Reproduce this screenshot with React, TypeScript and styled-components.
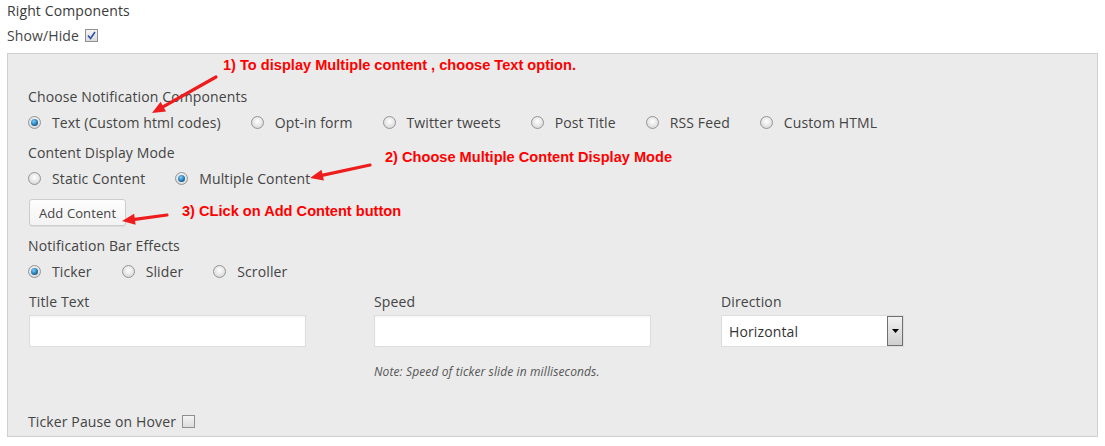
import React from "react";
import styled, { createGlobalStyle } from "styled-components";

const Global = createGlobalStyle`
  html, body { margin: 0; padding: 0; background: #fff; }
  body { font-family: "Open Sans", "Noto Sans", sans-serif; font-size: 14px; color: #444; letter-spacing: 0.12px; }
`;

const Page = styled.div`
  position: relative;
  width: 1105px;
  height: 446px;
  padding: 1px 0 0 7px;
  box-sizing: border-box;
`;

const Title = styled.div`
  line-height: 20px;
  color: #3a3a3a;
`;

const ShowHide = styled.div`
  display: flex;
  align-items: center;
  height: 20px;
  margin-top: 4px;
  gap: 6px;
`;

const Check = styled.span<{ $checked?: boolean }>`
  display: inline-flex;
  align-items: center;
  justify-content: center;
  width: 11px;
  height: 11px;
  border: 1px solid #8f8f8f;
  background: linear-gradient(#f4f4f4, #dcdcdc);
  box-sizing: content-box;
  svg { display: ${(p) => (p.$checked ? "block" : "none")}; }
`;

const Panel = styled.div`
  margin-top: 8px;
  width: 1091px;
  box-sizing: border-box;
  border: 1px solid #cfcfcf;
  background: #ebebeb;
  padding: 33px 20px 5px 20px;
`;

const Heading = styled.div`
  line-height: 20px;
  margin-bottom: 5px;
`;

const RadioRow = styled.div<{ $after?: number }>`
  display: flex;
  align-items: center;
  height: 20px;
  margin-bottom: ${(p) => p.$after ?? 11}px;
`;

const RadioItem = styled.label`
  display: inline-flex;
  align-items: center;
  margin-right: 30px;
  white-space: nowrap;
`;

const RadioDot = styled.span<{ $checked?: boolean }>`
  position: relative;
  width: 11px;
  height: 11px;
  border-radius: 50%;
  border: 1px solid #959595;
  background: radial-gradient(circle at 50% 40%, #ffffff, #cfcfcf);
  margin-right: 11px;
  flex: none;
  &::after {
    content: "";
    display: ${(p) => (p.$checked ? "block" : "none")};
    position: absolute;
    left: 2px;
    top: 2px;
    width: 7px;
    height: 7px;
    border-radius: 50%;
    background: radial-gradient(circle at 40% 35%, #7fd0ff, #1b6fa8 60%, #0e3f66);
  }
`;

const Button = styled.button`
  display: block;
  height: 27px;
  padding: 0 9px;
  margin: 1px 0 10px 1px;
  font-family: "Open Sans", "Noto Sans", sans-serif;
  font-size: 13px;
  letter-spacing: 0.1px;
  color: #444;
  background: linear-gradient(#fdfdfd, #f3f3f3);
  border: 1px solid #cccccc;
  border-radius: 3px;
  box-shadow: 0 1px 0 rgba(0,0,0,0.06);
`;

const FieldGrid = styled.div`
  display: grid;
  grid-template-columns: 345px 347px 1fr;
  margin-left: 1px;
  margin-top: 1px;
`;

const Field = styled.div`
  display: flex;
  flex-direction: column;
`;

const FieldLabel = styled.div`
  line-height: 20px;
  margin-bottom: 3px;
`;

const TextInput = styled.div`
  width: 277px;
  height: 32px;
  box-sizing: border-box;
  background: #fff;
  border: 1px solid #dddddd;
  box-shadow: inset 0 1px 2px rgba(0,0,0,0.05);
`;

const Note = styled.div`
  margin-top: 15px;
  font-size: 12px;
  font-style: italic;
  line-height: 20px;
  color: #555;
`;

const Select = styled.div`
  display: flex;
  align-items: stretch;
  width: 183px;
  height: 32px;
  box-sizing: border-box;
  background: #fff;
  border: 1px solid #dddddd;
`;

const SelectValue = styled.div`
  flex: 1;
  display: flex;
  align-items: center;
  padding-left: 7px;
  color: #333;
`;

const SelectArrow = styled.div`
  width: 14px;
  border: 1px solid #707070;
  background: linear-gradient(#f2f2f2, #cfcfcf);
  display: flex;
  align-items: center;
  justify-content: center;
`;

const PauseRow = styled.div`
  display: flex;
  align-items: center;
  gap: 6px;
  height: 20px;
  margin-top: 29px;
`;

const Annotation = styled.div<{ $x: number; $y: number }>`
  position: absolute;
  left: ${(p) => p.$x}px;
  top: ${(p) => p.$y}px;
  font-family: "Liberation Sans", Arial, sans-serif;
  font-weight: bold;
  font-size: 14.6px;
  letter-spacing: 0;
  line-height: 16px;
  color: #ff0000;
  white-space: nowrap;
`;

const Overlay = styled.svg`
  position: absolute;
  left: 0;
  top: 0;
  pointer-events: none;
`;

function arrow(tx: number, ty: number, hx: number, hy: number) {
  const dx = hx - tx;
  const dy = hy - ty;
  const len = Math.hypot(dx, dy);
  const ux = dx / len;
  const uy = dy / len;
  const hl = 13;
  const hw = 5.5;
  const bx = hx - ux * hl;
  const by = hy - uy * hl;
  const px = -uy * hw;
  const py = ux * hw;
  return {
    line: { x1: tx, y1: ty, x2: bx + ux * 2, y2: by + uy * 2 },
    head: `${hx},${hy} ${bx + px},${by + py} ${bx - px},${by - py}`,
  };
}

const arrows = [arrow(216, 77, 152, 113), arrow(370, 165, 310, 178), arrow(167, 215, 122, 221)];

const CheckMark = () => (
  <svg width="9" height="9" viewBox="0 0 9 9">
    <path d="M1 4.5 L3.5 7.5 L8 1" fill="none" stroke="#2c4fa8" strokeWidth="1.6" />
  </svg>
);

export default function App() {
  return (
    <>
      <Global />
      <Page>
        <Title>Right Components</Title>
        <ShowHide>
          Show/Hide
          <Check $checked>
            <CheckMark />
          </Check>
        </ShowHide>
        <Panel>
          <Heading>Choose Notification Components</Heading>
          <RadioRow>
            <RadioItem><RadioDot $checked />Text (Custom html codes)</RadioItem>
            <RadioItem><RadioDot />Opt-in form</RadioItem>
            <RadioItem><RadioDot />Twitter tweets</RadioItem>
            <RadioItem><RadioDot />Post Title</RadioItem>
            <RadioItem><RadioDot />RSS Feed</RadioItem>
            <RadioItem><RadioDot />Custom HTML</RadioItem>
          </RadioRow>
          <Heading>Content Display Mode</Heading>
          <RadioRow $after={11}>
            <RadioItem><RadioDot />Static Content</RadioItem>
            <RadioItem><RadioDot $checked />Multiple Content</RadioItem>
          </RadioRow>
          <Button>Add Content</Button>
          <Heading>Notification Bar Effects</Heading>
          <RadioRow>
            <RadioItem><RadioDot $checked />Ticker</RadioItem>
            <RadioItem><RadioDot />Slider</RadioItem>
            <RadioItem><RadioDot />Scroller</RadioItem>
          </RadioRow>
          <FieldGrid>
            <Field>
              <FieldLabel>Title Text</FieldLabel>
              <TextInput />
            </Field>
            <Field>
              <FieldLabel>Speed</FieldLabel>
              <TextInput />
              <Note>Note: Speed of ticker slide in milliseconds.</Note>
            </Field>
            <Field>
              <FieldLabel>Direction</FieldLabel>
              <Select>
                <SelectValue>Horizontal</SelectValue>
                <SelectArrow>
                  <svg width="7" height="4" viewBox="0 0 7 4">
                    <path d="M0 0 H7 L3.5 4 Z" fill="#000" />
                  </svg>
                </SelectArrow>
              </Select>
            </Field>
          </FieldGrid>
          <PauseRow>
            Ticker Pause on Hover
            <Check />
          </PauseRow>
        </Panel>
        <Annotation $x={223} $y={57}>1) To display Multiple content , choose Text option.</Annotation>
        <Annotation $x={385} $y={149}>2) Choose Multiple Content Display Mode</Annotation>
        <Annotation $x={182} $y={203}>3) CLick on Add Content button</Annotation>
        <Overlay width="1105" height="446">
          {arrows.map((a, i) => (
            <g key={i}>
              <line {...a.line} stroke="#ee1c1c" strokeWidth="3.2" strokeLinecap="round" />
              <polygon points={a.head} fill="#ee1c1c" />
            </g>
          ))}
        </Overlay>
      </Page>
    </>
  );
}
